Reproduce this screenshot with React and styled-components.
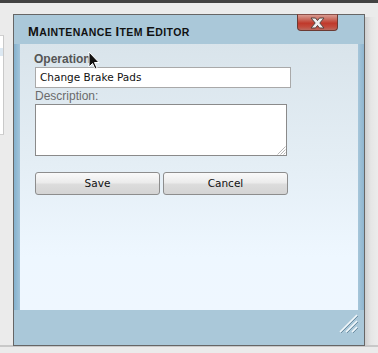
import styled, { createGlobalStyle } from "styled-components";

const GlobalStyle = createGlobalStyle`
  html, body {
    margin: 0;
    padding: 0;
    background: #ebebeb;
  }
`;

const Screen = styled.div`
  position: relative;
  width: 378px;
  height: 353px;
  overflow: hidden;
  background: #ebebeb;
  font-family: "Liberation Sans", Arial, sans-serif;
`;

const TopBar = styled.div`
  height: 3px;
  background: #424242;
`;

const Stage = styled.div`
  display: flex;
  align-items: flex-start;
  height: 344px;
  border-bottom: 2px solid #c8c8c8;
  box-sizing: border-box;
`;

const SidePanel = styled.div`
  width: 3px;
  height: 98px;
  margin-top: 32px;
  background: linear-gradient(#fff 0, #fff 12px, #dce8f2 12px, #dce8f2 20px, #fff 20px);
  border-right: 1px solid #c9c9c9;
  border-top: 1px solid #d0d0d0;
  border-bottom: 1px solid #d0d0d0;
`;

const Dialog = styled.div`
  display: flex;
  flex-direction: column;
  width: 350px;
  height: 330px;
  margin: 11px 0 0 9px;
  border: 1px solid #666;
  background: #aac8d9;
`;

const Shadow = styled.div`
  flex: 1;
  align-self: stretch;
  margin-top: 14px;
  background: linear-gradient(to right, #cfcfcf, #e6e6e6 6px, #ececec);
`;

const TitleBar = styled.div`
  display: flex;
  align-items: flex-start;
  height: 29px;
  padding-left: 14px;
`;

const Title = styled.div`
  margin-top: 10px;
  font-weight: bold;
  font-size: 10.5px;
  line-height: 13px;
  text-transform: uppercase;
  letter-spacing: 0.4px;
  color: #111;
`;

const Cap = styled.span`
  font-size: 13px;
`;

const CloseButton = styled.div`
  display: flex;
  align-items: center;
  justify-content: center;
  width: 39px;
  height: 15px;
  margin: -1px 26px 0 auto;
  border: 1px solid #6b3a33;
  border-top-color: #8a5049;
  border-radius: 0 0 4px 4px;
  background: linear-gradient(#d99a90 0, #c9685b 30%, #c0392b 55%, #c24c3e 80%, #b9695e 100%);
`;

const Body = styled.div`
  display: flex;
  height: 266px;
`;

const Side = styled.div`
  width: 6px;
  background: linear-gradient(to right, #86b2ce, #a2c4da);
`;

const SideRight = styled(Side)`
  background: linear-gradient(to right, #a6c6da, #8fb6d0);
`;

const Content = styled.div`
  flex: 1;
  display: flex;
  flex-direction: column;
  padding: 8px 0 0 14px;
  background: linear-gradient(#d9e4eb, #e4eef5 45%, #eef7ff 80%, #eff7ff);
`;

const Label = styled.label`
  font-size: 12px;
  line-height: 14px;
  color: ${(p) => (p.$strong ? "#555" : "#6b6b6b")};
  font-weight: ${(p) => (p.$strong ? "bold" : "normal")};
  margin-left: ${(p) => (p.$strong ? "0" : "1px")};
`;

const TextInput = styled.div`
  width: 246px;
  height: 19px;
  margin: 1px 0 1px 1px;
  padding: 0 4px;
  border: 1px solid #a9a9a9;
  background: #fff;
  font-family: "DejaVu Sans", sans-serif;
  font-size: 10.5px;
  line-height: 19px;
  color: #111;
`;

const TextArea = styled.div`
  position: relative;
  width: 250px;
  height: 50px;
  margin: 1px 0 0 1px;
  border: 1px solid #8a8a8a;
  background: #fff;
`;

const Grip = styled.svg`
  position: absolute;
  right: 0;
  bottom: 0;
`;

const ButtonRow = styled.div`
  display: flex;
  gap: 3px;
  margin: 16px 0 0 1px;
`;

const Button = styled.div`
  width: 123px;
  height: 21px;
  border: 1px solid #8d8d8d;
  border-radius: 3px;
  background: linear-gradient(#fafafa, #ececec 45%, #dcdcdc 55%, #d4d4d4);
  font-family: "DejaVu Sans", sans-serif;
  font-size: 10.5px;
  line-height: 21px;
  text-align: center;
  color: #111;
`;

const Footer = styled.div`
  display: flex;
  justify-content: flex-end;
  align-items: flex-start;
  flex: 1;
  padding: 3px 6px 0 0;
`;

const Cursor = styled.svg`
  position: absolute;
  left: 88px;
  top: 51px;
`;

function CloseIcon() {
  return (
    <svg width="17" height="12" viewBox="0 0 17 12">
      <path
        d="M2 1h4.5l2 2.6L10.5 1H15l-4.2 5L15 11h-4.5l-2-2.6L6.5 11H2l4.2-5z"
        fill="#efefef"
        stroke="#54423f"
        strokeWidth="1"
        strokeLinejoin="round"
      />
    </svg>
  );
}

function ResizeGrip({ size, color }) {
  return (
    <Grip width={size} height={size} viewBox="0 0 20 20">
      <path d="M19 3L3 19M19 9L9 19M19 15L15 19" stroke={color} strokeWidth="1.4" />
    </Grip>
  );
}

function SmallCaps({ text }) {
  return text.split(" ").map((word, i) => (
    <span key={i}>
      {i > 0 ? " " : ""}
      <Cap>{word[0]}</Cap>
      {word.slice(1)}
    </span>
  ));
}

export default function App() {
  return (
    <>
      <GlobalStyle />
      <Screen>
        <TopBar />
        <Stage>
          <SidePanel />
          <Dialog>
            <TitleBar>
              <Title>
                <SmallCaps text="Maintenance Item Editor" />
              </Title>
              <CloseButton>
                <CloseIcon />
              </CloseButton>
            </TitleBar>
            <Body>
              <Side />
              <Content>
                <Label $strong>Operation</Label>
                <TextInput>Change Brake Pads</TextInput>
                <Label>Description:</Label>
                <TextArea>
                  <ResizeGrip size={10} color="#9a9a9a" />
                </TextArea>
                <ButtonRow>
                  <Button>Save</Button>
                  <Button>Cancel</Button>
                </ButtonRow>
              </Content>
              <SideRight />
            </Body>
            <Footer>
              <svg width="20" height="20" viewBox="0 0 20 20">
                <path d="M19 2L2 19M19 8L8 19M19 14L14 19" stroke="#f2f7fa" strokeWidth="1.5" />
                <path d="M20 3L3 20M20 9L9 20M20 15L15 20" stroke="#6f8fa3" strokeWidth="1" />
              </svg>
            </Footer>
          </Dialog>
          <Shadow />
        </Stage>
        <Cursor width="12" height="19" viewBox="0 0 12 19">
          <path d="M1 1v15l3.5-3.5 2.5 5.5 2-1-2.5-5.5H11z" fill="#111" stroke="#fff" strokeWidth="1" />
        </Cursor>
      </Screen>
    </>
  );
}
